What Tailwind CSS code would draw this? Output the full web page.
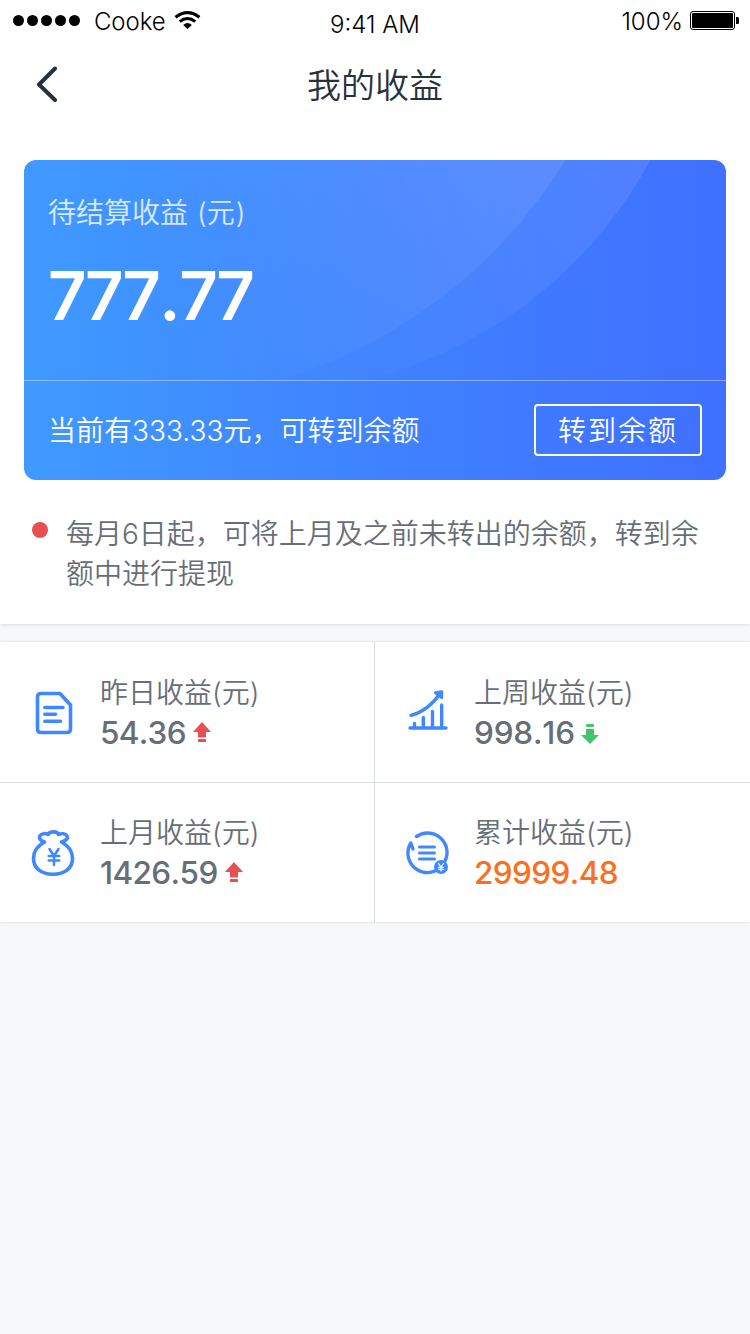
<!DOCTYPE html>
<html lang="zh-CN">
<head>
<meta charset="utf-8">
<title>我的收益</title>
<script src="https://cdn.jsdelivr.net/npm/@tailwindcss/browser@4"></script>
</head>
<body class="w-[750px] h-[1334px] overflow-hidden bg-[#f6f8fa] font-['Inter','Noto_Sans_CJK_SC',sans-serif] text-[#666e77]">
<section class="h-[624px] bg-white shadow-[0_1px_3px_rgba(0,0,0,0.12)]">
  <header>
    <div class="grid grid-cols-3 h-10 text-black text-2xl leading-none whitespace-nowrap">
      <div class="flex items-start pl-[13px] pt-2">
        <svg class="mt-[7px] w-[67px] h-[11px]" viewBox="0 0 67 11"><circle cx="5.5" cy="5.5" r="5.5"/><circle cx="19.5" cy="5.5" r="5.5"/><circle cx="33.5" cy="5.5" r="5.5"/><circle cx="47.5" cy="5.5" r="5.5"/><circle cx="61.5" cy="5.5" r="5.5"/></svg>
        <span class="ml-[14px] mt-[2px] w-[80px] font-light tracking-[-0.100px]">Cooke</span>
        <svg class="mt-[3px] w-[27px] h-[18px]" viewBox="0 0 27 18" fill="none" stroke="#000" stroke-width="3"><path d="M1.5 6.2 Q13.5 -3 25.5 6.2"/><path d="M5.8 10.6 Q13.5 4.4 21.2 10.6"/><path d="M9.200 14 Q13.5 10.2 17.8 14 L13.5 18 Z" fill="#000" stroke="none"/></svg>
      </div>
      <div class="flex justify-center pt-[13px]"><span class="font-light">9:41 AM</span></div>
      <div class="flex justify-end items-start pt-[9px] pr-[11px]">
        <span class="font-light mt-px mr-[7px]">100%</span>
        <svg class="mt-[2px] w-[49px] h-[19px]" viewBox="0 0 49 19"><rect x="0.5" y="0.5" width="44" height="18" rx="2.5" fill="none" stroke="#000"/><rect x="2" y="2" width="41" height="15" rx="1"/><path d="M46 6h1.500q1.500 0 1.500 1.500v4q0 1.500 -1.500 1.500h-1.500z"/></svg>
      </div>
    </div>
    <div class="grid grid-cols-[100px_1fr_100px] items-center h-[88px] text-[#27313d]">
      <svg class="ml-[35px] w-6 h-9" viewBox="0 0 24 36" fill="none" stroke="currentColor" stroke-width="4" stroke-linecap="round" stroke-linejoin="round"><path d="M20 2.500 4 18.500l16 15.500"/></svg>
      <h1 class="pt-1 text-center text-[34px] leading-[50px] font-[350]">我的收益</h1>
    </div>
  </header>
  <div class="mt-8 mx-6 h-[320px] rounded-xl overflow-hidden bg-[linear-gradient(90deg,#3f9aff_0%,#3f91ff_20%,#3f82ff_50%,#3f70ff_100%)] text-white relative">
    <svg class="absolute left-0 top-0 w-[702px] h-[220px]" viewBox="24 160 702 220">
      <defs>
        <linearGradient id="g1" gradientUnits="userSpaceOnUse" x1="150" y1="330" x2="590" y2="110"><stop offset="0" stop-color="#fff" stop-opacity="0"/><stop offset="1" stop-color="#fff" stop-opacity=".09"/></linearGradient>
        <linearGradient id="g2" gradientUnits="userSpaceOnUse" x1="260" y1="360" x2="650" y2="160"><stop offset="0" stop-color="#fff" stop-opacity="0"/><stop offset="1" stop-color="#fff" stop-opacity=".09"/></linearGradient>
      </defs>
      <circle cx="261.500" cy="-50" r="442" fill="url(#g2)"/>
      <circle cx="135.400" cy="-103" r="504" fill="url(#g1)"/>
    </svg>
    <div class="relative h-[221px] border-b border-white/40 pl-6 pt-[33px]">
      <div class="text-[28px] leading-10 text-white/80 font-[350]">待结算收益<span class="ml-[9px]">(</span>元<span class="ml-px">)</span></div>
      <div class="mt-[21px] text-[67px] leading-[84px] font-semibold tracking-[-1.500px] [font-kerning:none]">777.77</div>
    </div>
    <div class="relative h-[98px] flex items-center justify-between pl-6 pr-6">
      <div class="pt-[2px] text-[28px] leading-10 whitespace-nowrap font-[350]">当前有<span class="font-light">333.33</span>元，可转到余额</div>
      <button class="w-[168px] h-[52px] border-2 border-white rounded-[4px] pt-px text-[28px] leading-10 tracking-[2px] font-[350]">转到余额</button>
    </div>
  </div>
  <div class="flex pl-8 pt-[34px]">
    <span class="mt-2 w-4 h-4 rounded-full bg-[#e65054]"></span>
    <p class="ml-[18px] w-[650px] text-[28px] leading-10 font-[350]">每月<span class="font-light">6</span>日起，可将上月及之前未转出的余额，转到余<br>额中进行提现</p>
  </div>
</section>
<section class="mt-[18px] h-[280px] grid grid-cols-[375px_375px] grid-rows-[141px_139px] bg-white shadow-[0_0_3px_rgba(0,0,0,0.14)] whitespace-nowrap">
  <div class="flex border-r border-b border-[#d9dcdf] pl-[30px] pt-[31px]">
    <svg class="mt-[15px] w-12 h-12" viewBox="30 688 48 48" fill="none" stroke="#4088ff" stroke-width="3.600" stroke-linecap="round" stroke-linejoin="round"><path d="M41 693.500H60L70.500 705V729q0 3.500-3.500 3.500H41q-3.500 0-3.500-3.500V697q0-3.500 3.500-3.500z"/><path d="M44.800 707.500H63M44.800 714.300H55.500M44.800 721.200H60.500"/></svg>
    <div class="ml-[22px]"><div class="text-[28px] leading-10 font-[350]">昨日收益(元)</div>
    <div class="flex text-[31.500px] leading-10 font-medium"><span class="w-[85px] tracking-[-0.700px] [font-kerning:none]">54.36</span><svg class="ml-2 mt-[9px] w-[18px] h-5" viewBox="0 0 18 20" fill="#e65054"><path d="M9 0 18 10H13V15.500H5V10H0z"/><rect x="5" y="17" width="8" height="3" rx=".5"/></svg></div></div>
  </div>
  <div class="flex border-b border-[#d9dcdf] pl-[29px] pt-[31px]">
    <svg class="mt-[15px] w-12 h-12" viewBox="404 688 48 48" fill="none" stroke="#4088ff" stroke-width="3.400" stroke-linecap="round" stroke-linejoin="round"><path d="M410 728H446M414.500 723.500V727M423.300 717.500V727M432.500 711.500V727M441.700 705V727"/><path d="M411 715.300Q428 711 440.500 693"/><path d="M435.500 692.700 441.700 691.700 441.700 697.500z" fill="#4088ff" stroke-width="3"/></svg>
    <div class="ml-[22px]"><div class="text-[28px] leading-10 font-[350]">上周收益(元)</div>
    <div class="flex text-[31.500px] leading-10 font-medium"><span class="w-[99px] tracking-[-0.200px] [font-kerning:none]">998.16</span><svg class="ml-2 mt-[11px] w-[18px] h-5" viewBox="0 0 18 20" fill="#41c46b"><path d="M9 20 18 11H13V5H5V11H0z"/><rect x="5" y="0" width="8" height="3" rx="1"/></svg></div></div>
  </div>
  <div class="flex border-r border-[#d9dcdf] pl-[30px] pt-[30px]">
    <svg class="mt-[15px] w-12 h-12" viewBox="30 828 48 48" fill="none" stroke="#4088ff" stroke-width="3.600" stroke-linecap="round" stroke-linejoin="round"><path d="M44.500 842C37 846 33.500 852 33.500 858.500C33.500 868 41 874.200 53 874.200S72.500 868 72.500 858.500C72.500 852 69 846 61.500 842C66 841 68.300 838.500 67 836C65.500 833.300 61.500 833.300 58.500 834.500C57.500 831 49.500 831 48.300 834.500C45.500 833.300 41.500 833 39.800 836C38.800 838.500 40.500 841 44.500 842z"/><path d="M49.500 849 54 856 58.500 849M54 856V865M48.800 856H59.200M48.800 860.500H59.200" stroke-width="2.600"/></svg>
    <div class="ml-[22px]"><div class="text-[28px] leading-10 font-[350]">上月收益(元)</div>
    <div class="flex text-[31.500px] leading-10 font-medium"><span class="w-[117px] tracking-[-0.600px] [font-kerning:none]">1426.59</span><svg class="ml-2 mt-[9px] w-[18px] h-5" viewBox="0 0 18 20" fill="#e65054"><path d="M9 0 18 10H13V15.500H5V10H0z"/><rect x="5" y="17" width="8" height="3" rx=".5"/></svg></div></div>
  </div>
  <div class="flex pl-[29px] pt-[30px]">
    <svg class="mt-[15px] w-12 h-12" viewBox="404 828 48 48" fill="none" stroke="#4088ff" stroke-width="3.400" stroke-linecap="round" stroke-linejoin="round"><path d="M416.500 836.500A19.400 19.400 0 0 1 445 861M435 871A19.400 19.400 0 0 1 410.800 843L413 849"/><path d="M419.500 847H434.500M419.500 853H434.500M419.500 859H434.500" stroke-width="3"/><circle cx="441" cy="867" r="7" fill="#4088ff" stroke="none"/><path d="M438.500 863.500 441 867 443.500 863.500M441 867V871M438.500 867.300H443.500M438.500 869.300H443.500" stroke="#fff" stroke-width="1.200"/></svg>
    <div class="ml-[22px]"><div class="text-[28px] leading-10 font-[350]">累计收益(元)</div>
    <div class="text-[31.500px] leading-10 font-medium tracking-[-0.600px] [font-kerning:none] text-[#fb6f20]">29999.48</div></div>
  </div>
</section>
</body>
</html>
